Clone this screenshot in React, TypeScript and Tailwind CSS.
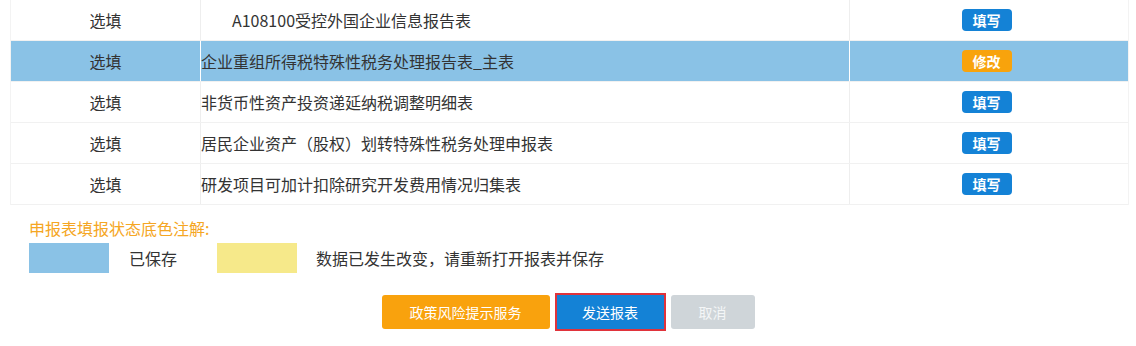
import React from "react";

type Row = {
  kind: string;
  name: string;
  indent?: boolean;
  saved?: boolean;
};

const rows: Row[] = [
  { kind: "选填", name: "A108100受控外国企业信息报告表", indent: true },
  { kind: "选填", name: "企业重组所得税特殊性税务处理报告表_主表", saved: true },
  { kind: "选填", name: "非货币性资产投资递延纳税调整明细表" },
  { kind: "选填", name: "居民企业资产（股权）划转特殊性税务处理申报表" },
  { kind: "选填", name: "研发项目可加计扣除研究开发费用情况归集表" },
];

const font = { fontFamily: '"Microsoft YaHei", "Noto Sans CJK SC", "Noto Sans", sans-serif' };

function TableRow({ row }: { row: Row }) {
  const bg = row.saved ? "bg-[#8ac2e6]" : "bg-white";
  const divider = row.saved ? "border-white" : "border-[#eeeeee]";
  return (
    <div className={`flex h-[41px] border-b border-[#f1f1f1] ${bg}`}>
      <div className={`w-[190px] shrink-0 flex items-center justify-center border-r ${divider}`}>
        {row.kind}
      </div>
      <div className={`w-[649px] shrink-0 flex items-center border-r ${divider} ${row.indent ? "pl-[31px]" : ""}`}>
        {row.name}
      </div>
      <div className="flex-1 flex items-center justify-center pr-[5px]">
        {row.saved ? (
          <span className="w-[50px] h-[22px] rounded-[4px] bg-[#f8a30c] text-white text-[14px] font-bold flex items-center justify-center">
            修改
          </span>
        ) : (
          <span className="w-[50px] h-[22px] rounded-[4px] bg-[#1482d6] text-white text-[14px] font-bold flex items-center justify-center">
            填写
          </span>
        )}
      </div>
    </div>
  );
}

export default function App() {
  return (
    <div className="w-[1136px] h-[346px] bg-white text-[#333333] text-[16px] overflow-hidden" style={font}>
      <div className="ml-[10px] w-[1119px] border-x border-[#f3f3f3]">
        {rows.map((r, i) => (
          <TableRow key={i} row={r} />
        ))}
      </div>

      <div className="pl-[29px] pt-[13px]">
        <div className="text-[#f5a623] leading-[20px]">申报表填报状态底色注解:</div>
        <div className="flex items-center mt-[5px]">
          <div className="w-[80px] h-[30px] bg-[#8ac2e6]" />
          <span className="w-[108px] pl-[20px]">已保存</span>
          <div className="w-[80px] h-[30px] bg-[#f6e98a]" />
          <span className="ml-[19px]">数据已发生改变，请重新打开报表并保存</span>
        </div>
      </div>

      <div className="flex justify-center items-center mt-[20px] gap-[5px]">
        <button className="w-[168px] h-[34px] rounded-[3px] bg-[#f9a20d] text-white text-[14px]">
          政策风险提示服务
        </button>
        <button className="w-[111px] h-[38px] border-2 border-[#e0333b] bg-[#1482d6] text-white text-[14px]">
          发送报表
        </button>
        <button className="w-[84px] h-[34px] rounded-[3px] bg-[#cfd5d9] text-[#f4f6f7] text-[14px]">
          取消
        </button>
      </div>
    </div>
  );
}
